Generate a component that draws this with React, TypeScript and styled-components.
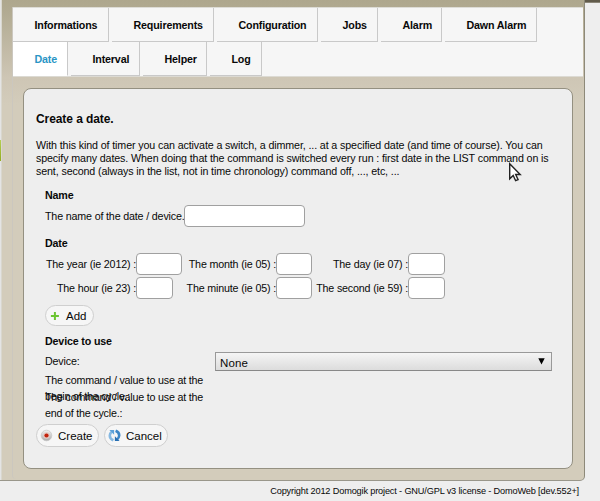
import React from "react";
import styled, { createGlobalStyle } from "styled-components";

const Global = createGlobalStyle`
  * { box-sizing: border-box; }
  html, body { margin: 0; padding: 0; }
  body { width: 600px; height: 501px; overflow: hidden; background: #eee; }
`;

const Page = styled.div`
  position: relative;
  width: 600px;
  height: 501px;
  overflow: hidden;
  background: #eeeeee;
  color: #080808;
  font: 10.7px "Liberation Sans", Arial, sans-serif;
  letter-spacing: -0.16px;
`;

const Top = styled.div`
  display: flex;
  height: 481px;
`;

const Frame = styled.div`
  display: flex;
  width: 585px;
  height: 481px;
  border-right: 1px solid #8d8979;
  border-bottom: 1px solid #99968a;
  border-bottom-right-radius: 5px;
  background: linear-gradient(#aea78d 0, #b0a990 8px, #cec6b5 78px, #d3ccbb 105px);
`;

const PageEdge = styled.div`
  flex: none;
  width: 2px;
  border-right: 1px solid #d9d7ce;
  background: linear-gradient(#e4e4e4 0 140px, #b5cf55 140px, #93ab1f 161px, #e4e4e4 161px);
`;

const Body = styled.div`
  flex: none;
  width: 572px;
  height: 472px;
  margin: 7px 0 0 10px;
  border-left: 1px solid #cbc7bf;
  border-bottom-left-radius: 4px;
`;

const Tabs = styled.nav`
  width: 570px;
  height: 70px;
  background: #f6f6f6;
  border-top: 1px solid #dddcd6;
  border-bottom: 1px solid #dcdad3;
`;

const TabRow = styled.div`
  display: flex;
  gap: 3px;
  height: 34px;
`;

const Tab = styled.a<{ $w: number; $active?: boolean }>`
  width: ${(p) => p.$w}px;
  height: 34px;
  padding-left: 21.5px;
  border-right: 1px solid #c9c9c9;
  border-bottom: 1px solid ${(p) => (p.$active ? "#fff" : "#c9c9c9")};
  background: ${(p) => (p.$active ? "#fff" : "#f6f6f6")};
  color: ${(p) => (p.$active ? "#2a95c5" : "#080808")};
  font-weight: bold;
  line-height: 34px;
  white-space: nowrap;
`;

const Panel = styled.section`
  width: 550px;
  height: 381px;
  margin: 11px 0 0 10px;
  padding: 23px 11px 0 12px;
  border: 1px solid #949081;
  border-radius: 8px;
  background: #eeeeee;
`;

const Title = styled.h1`
  margin: 0;
  height: 14px;
  font-size: 12px;
  line-height: 14px;
  letter-spacing: -0.08px;
  white-space: nowrap;
`;

const Intro = styled.p`
  margin: 13px 0 0;
  line-height: 13px;
  letter-spacing: -0.12px;
  white-space: nowrap;
`;

const Group = styled.div`
  margin-left: 9px;
`;

const Heading = styled.h2<{ $mt: number }>`
  margin: ${(p) => p.$mt}px 0 0;
  height: 14px;
  font-size: 10.7px;
  line-height: 14px;
`;

const NameRow = styled.label`
  display: flex;
  align-items: center;
  height: 22px;
  margin-top: 3px;
  white-space: nowrap;
`;

const NameText = styled.span`
  width: 139px;
`;

const Input = styled.input<{ $w: number }>`
  display: block;
  flex: none;
  width: ${(p) => p.$w}px;
  height: 22px;
  margin: 0;
  padding: 0 4px;
  border: 1px solid #a0a0a0;
  border-radius: 4px;
  background: #fff;
`;

const DateGrid = styled.div`
  display: grid;
  grid-template-columns: 138px 133px 129px;
  grid-auto-rows: 22px;
  row-gap: 2px;
  margin-top: 3px;
`;

const Field = styled.label<{ $text: number }>`
  display: grid;
  grid-template-columns: ${(p) => p.$text}px auto;
  align-items: center;
  justify-content: start;
  white-space: nowrap;
`;

const FieldText = styled.span`
  justify-self: end;
`;

const Button = styled.button<{ $w: number; $h: number }>`
  display: flex;
  align-items: center;
  gap: 5px;
  width: ${(p) => p.$w}px;
  height: ${(p) => p.$h}px;
  padding: 0 0 0 3px;
  border: 1px solid #cfcfcf;
  border-radius: 12px;
  background: #f6f6f6;
  color: #080808;
  font: 11.5px/14px "Liberation Sans", Arial, sans-serif;
  white-space: nowrap;
`;

const AddWrap = styled.div`
  margin-top: 6px;
`;

const DeviceRow = styled.div`
  display: flex;
  align-items: center;
  height: 19px;
  margin-top: 4px;
`;

const DeviceText = styled.span`
  width: 170px;
  margin-top: -2px;
`;

const Select = styled.div`
  display: flex;
  align-items: center;
  justify-content: space-between;
  width: 337px;
  height: 19px;
  padding: 2px 6px 0 4px;
  border: 1px solid #999;
  border-bottom-color: #888;
  background: linear-gradient(#f5f5f5, #dcdcdc);
  font-size: 11.5px;
  letter-spacing: 0.1px;
`;

const Arrow = styled.svg`
  margin-top: -3px;
`;

const CommandText = styled.p`
  width: 170px;
  height: 17px;
  margin: 0;
  line-height: 16px;
  letter-spacing: -0.2px;
  white-space: nowrap;
`;

const Commands = styled.div`
  margin-top: 1px;
`;

const Actions = styled.div`
  display: flex;
  gap: 5px;
  margin-top: 18px;
`;

const Footer = styled.footer`
  height: 20px;
  padding: 4px 21px 0 0;
  font-size: 9.2px;
  line-height: 13px;
  text-align: right;
`;

const SideTop = styled.div`
  width: 15px;
  height: 3px;
  background: #615b4b;
  border-bottom: 1px solid #8b8678;
`;

const Pointer = styled.svg`
  position: absolute;
  left: 508px;
  top: 162px;
`;

const PlusIcon = () => (
  <svg width="12" height="14" viewBox="1 0 12 14">
    <path d="M5.9 2.9h2v3h3v2h-3v3h-2v-3h-3v-2h3z" fill="#6cc532" />
  </svg>
);

const RecordIcon = () => (
  <svg width="13" height="13" viewBox="0 0 13 13">
    <defs>
      <linearGradient id="rim" x1="0" y1="0" x2="0" y2="1">
        <stop offset="0" stopColor="#f2f2f2" />
        <stop offset="1" stopColor="#a9a9a9" />
      </linearGradient>
    </defs>
    <circle cx="6.5" cy="6.5" r="5.3" fill="url(#rim)" stroke="#c4c4c4" strokeWidth=".7" />
    <circle cx="6.5" cy="6.5" r="3.2" fill="#e3c9c3" />
    <circle cx="6.5" cy="6.5" r="2.1" fill="#c2220c" />
  </svg>
);

const RefreshIcon = () => (
  <svg width="13" height="13" viewBox="0 0 13 13" fill="none" strokeWidth="2.6">
    <path d="M5.4 11.2Q1.7 9.8 1.8 6.5 2 4 3.8 2.7" stroke="#86b9e2" />
    <path d="M7.6 1.8Q11.3 3.2 11.2 6.5 11 9 9.2 10.3" stroke="#3c86c6" />
    <path d="M1.4 1.1h4.7v4.7z" fill="#5ba1d9" />
    <path d="M11.6 11.9H6.9V7.2z" fill="#266eb2" />
  </svg>
);

const rows: [string, number, boolean?][][] = [
  [["Informations", 96], ["Requirements", 102], ["Configuration", 101], ["Jobs", 57], ["Alarm", 61], ["Dawn Alarm", 92]],
  [["Date", 55, true], ["Interval", 69], ["Helper", 64], ["Log", 52]],
];

const fields: [string, number, number][] = [
  ["The year (ie 2012) :", 91, 46],
  ["The month (ie 05) :", 93, 36],
  ["The day (ie 07) :", 92, 37],
  ["The hour (ie 23) :", 91, 37],
  ["The minute (ie 05) :", 93, 36],
  ["The second (ie 59) :", 92, 37],
];

export default function App() {
  return (
    <Page>
      <Global />
      <Top>
        <Frame>
          <PageEdge />
          <Body>
            <Tabs>
              {rows.map((row, i) => (
                <TabRow key={i}>
                  {row.map(([label, w, active]) => (
                    <Tab key={label} $w={w} $active={active}>{label}</Tab>
                  ))}
                </TabRow>
              ))}
            </Tabs>
            <Panel>
              <Title>Create a date.</Title>
              <Intro>
                With this kind of timer you can activate a switch, a dimmer, ... at a specified date (and time of course). You can<br />
                specify many dates. When doing that the command is switched every run : first date in the LIST command on is<br />
                sent, second (always in the list, not in time chronology) command off, ..., etc, ...
              </Intro>
              <Group>
                <Heading $mt={10}>Name</Heading>
                <NameRow>
                  <NameText>The name of the date / device.</NameText>
                  <Input $w={121} />
                </NameRow>
                <Heading $mt={9}>Date</Heading>
                <DateGrid>
                  {fields.map(([label, text, w]) => (
                    <Field key={label} $text={text}>
                      <FieldText>{label}</FieldText>
                      <Input $w={w} />
                    </Field>
                  ))}
                </DateGrid>
                <AddWrap>
                  <Button $w={49} $h={21}><PlusIcon />Add</Button>
                </AddWrap>
                <Heading $mt={8}>Device to use</Heading>
                <DeviceRow>
                  <DeviceText>Device:</DeviceText>
                  <Select>
                    None
                    <Arrow width="7" height="7" viewBox="0 0 7 7"><path d="M.3.3h6.4L3.5 6.5z" fill="#000" /></Arrow>
                  </Select>
                </DeviceRow>
                <Commands>
                  <CommandText>The command / value to use at the<br />begin of the cycle.:</CommandText>
                  <CommandText>The command / value to use at the<br />end of the cycle.:</CommandText>
                </Commands>
              </Group>
              <Actions>
                <Button $w={63} $h={23}><RecordIcon />Create</Button>
                <Button $w={64} $h={23}><RefreshIcon />Cancel</Button>
              </Actions>
            </Panel>
          </Body>
        </Frame>
        <SideTop />
      </Top>
      <Footer>Copyright 2012 Domogik project - GNU/GPL v3 license - DomoWeb [dev.552+]</Footer>
      <Pointer width="14" height="21" viewBox="0 0 14 21">
        <path d="M1.7 1.8v15l3.5-3.3 2.4 5.2 2.5-1.1-2.4-5.1h4.5z" fill="#fff" stroke="#222" strokeWidth="1.4" />
      </Pointer>
    </Page>
  );
}
